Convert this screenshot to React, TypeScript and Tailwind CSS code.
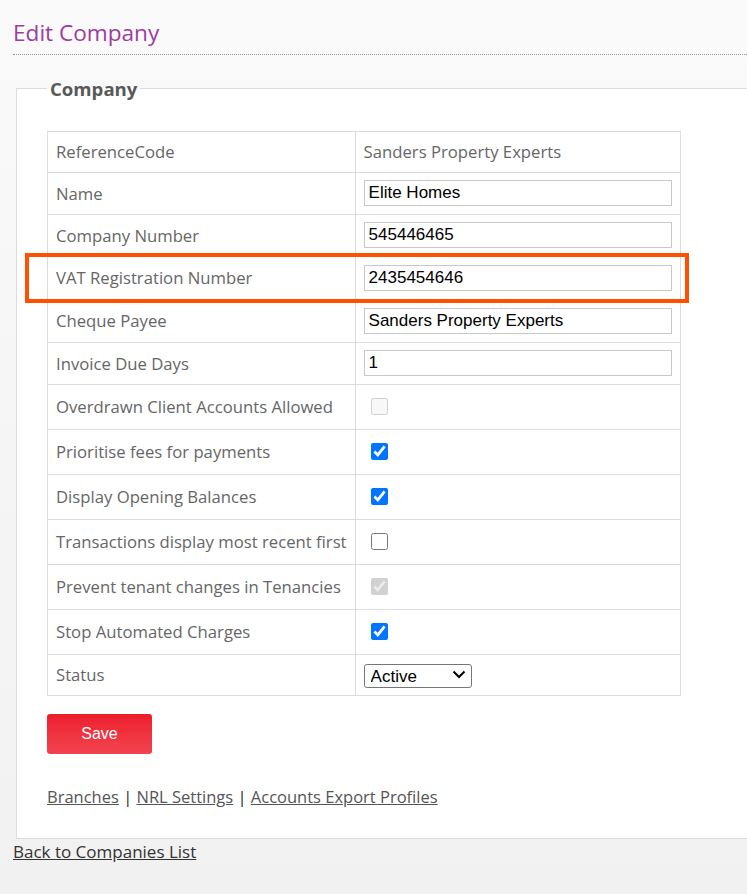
import { useState } from "react";

type Row =
  | { label: string; kind: "static"; value: string; h: string }
  | { label: string; kind: "text"; value: string; h: string }
  | { label: string; kind: "check"; checked: boolean; disabled?: boolean }
  | { label: string; kind: "select"; value: string };

const rows: Row[] = [
  { label: "ReferenceCode", kind: "static", value: "Sanders Property Experts", h: "h-[41px]" },
  { label: "Name", kind: "text", value: "Elite Homes", h: "h-[42px]" },
  { label: "Company Number", kind: "text", value: "545446465", h: "h-[42px]" },
  { label: "VAT Registration Number", kind: "text", value: "2435454646", h: "h-[43px]" },
  { label: "Cheque Payee", kind: "text", value: "Sanders Property Experts", h: "h-[43px]" },
  { label: "Invoice Due Days", kind: "text", value: "1", h: "h-[42px]" },
  { label: "Overdrawn Client Accounts Allowed", kind: "check", checked: false, disabled: true },
  { label: "Prioritise fees for payments", kind: "check", checked: true },
  { label: "Display Opening Balances", kind: "check", checked: true },
  { label: "Transactions display most recent first", kind: "check", checked: false },
  { label: "Prevent tenant changes in Tenancies", kind: "check", checked: true, disabled: true },
  { label: "Stop Automated Charges", kind: "check", checked: true },
  { label: "Status", kind: "select", value: "Active" },
];

const labelFont = "font-['Open_Sans',sans-serif]";

function ValueCell({ row }: { row: Row }) {
  if (row.kind === "static") {
    return <span className="text-[#666]">{row.value}</span>;
  }
  if (row.kind === "text") {
    return (
      <input
        type="text"
        defaultValue={row.value}
        className="block w-[308px] h-[26px] border border-[#c8c8c8] bg-white px-[4px] text-[17px] text-black font-['Liberation_Sans',Arial,sans-serif] outline-none"
      />
    );
  }
  if (row.kind === "check") {
    return (
      <input
        type="checkbox"
        defaultChecked={row.checked}
        disabled={row.disabled}
        className="block ml-[7px] w-[17px] h-[17px] m-0 accent-[#0075ff]"
      />
    );
  }
  return (
    <div className="relative w-[108px] h-[24px]">
      <select
        defaultValue={row.value}
        className="appearance-none w-full h-full border border-[#767676] rounded-[3px] bg-white pl-[6px] text-[17px] leading-none text-black font-['Liberation_Sans',Arial,sans-serif] outline-none"
      >
        <option>Active</option>
        <option>Inactive</option>
      </select>
      <svg
        className="pointer-events-none absolute right-[6px] top-[7px]"
        width="14"
        height="9"
        viewBox="0 0 14 9"
        fill="none"
      >
        <path d="M1.5 1.5 L7 7 L12.5 1.5" stroke="#000" strokeWidth="2" />
      </svg>
    </div>
  );
}

export default function App() {
  const [rowsState] = useState(rows);

  return (
    <div className={`min-h-[894px] bg-gradient-to-b from-[#fafafa] to-[#f1f1f1] ${labelFont}`}>
      <div className="pl-[13px] pt-[16px]">
        <h1 className="text-[22.6px] leading-[34px] text-[#9b3d9f] font-normal">Edit Company</h1>
        <div className="mt-[4px] border-b border-dotted border-[#9a9a9a]" />
      </div>

      <fieldset className="ml-[16px] mt-[20px] border border-r-0 border-[#dcdcdc] bg-white pl-[30px] pr-0 pt-[28px] pb-[28px]">
        <legend className="ml-[0px] px-[3px] text-[18.6px] font-bold text-[#595959]">Company</legend>

        <div className="relative w-[632px]">
          <table className="border-collapse text-[16.7px] w-[632px]">
            <tbody>
              {rowsState.map((r) => {
                const h =
                  r.kind === "check" ? "h-[45px]" : r.kind === "select" ? "h-[41px]" : r.h;
                return (
                  <tr key={r.label} className={h}>
                    <td className="w-[308px] border border-[#dcdcdc] px-[8px] py-0 text-[#666] whitespace-nowrap align-middle">
                      {r.label}
                    </td>
                    <td className="border border-[#dcdcdc] px-[8px] py-0 align-middle">
                      <ValueCell row={r} />
                    </td>
                  </tr>
                );
              })}
            </tbody>
          </table>
          <div className="pointer-events-none absolute left-[-22px] top-[122px] w-[664px] h-[50px] border-[4px] border-[#ff4f00]" />
        </div>

        <button className="mt-[18px] block w-[105px] h-[40px] rounded-[3px] bg-gradient-to-b from-[#ed1c2b] to-[#f2434f] text-white text-[16px] font-['Liberation_Sans',Arial,sans-serif]">
          Save
        </button>

        <div className="mt-[31px] text-[16.5px] text-[#555]">
          <a href="#" className="underline">Branches</a>
          <span className="text-[#223]"> | </span>
          <a href="#" className="underline">NRL Settings</a>
          <span className="text-[#223]"> | </span>
          <a href="#" className="underline">Accounts Export Profiles</a>
        </div>
      </fieldset>

      <div className="pl-[13px] pt-0">
        <a href="#" className="underline text-[17px] text-[#333]">Back to Companies List</a>
      </div>
    </div>
  );
}
